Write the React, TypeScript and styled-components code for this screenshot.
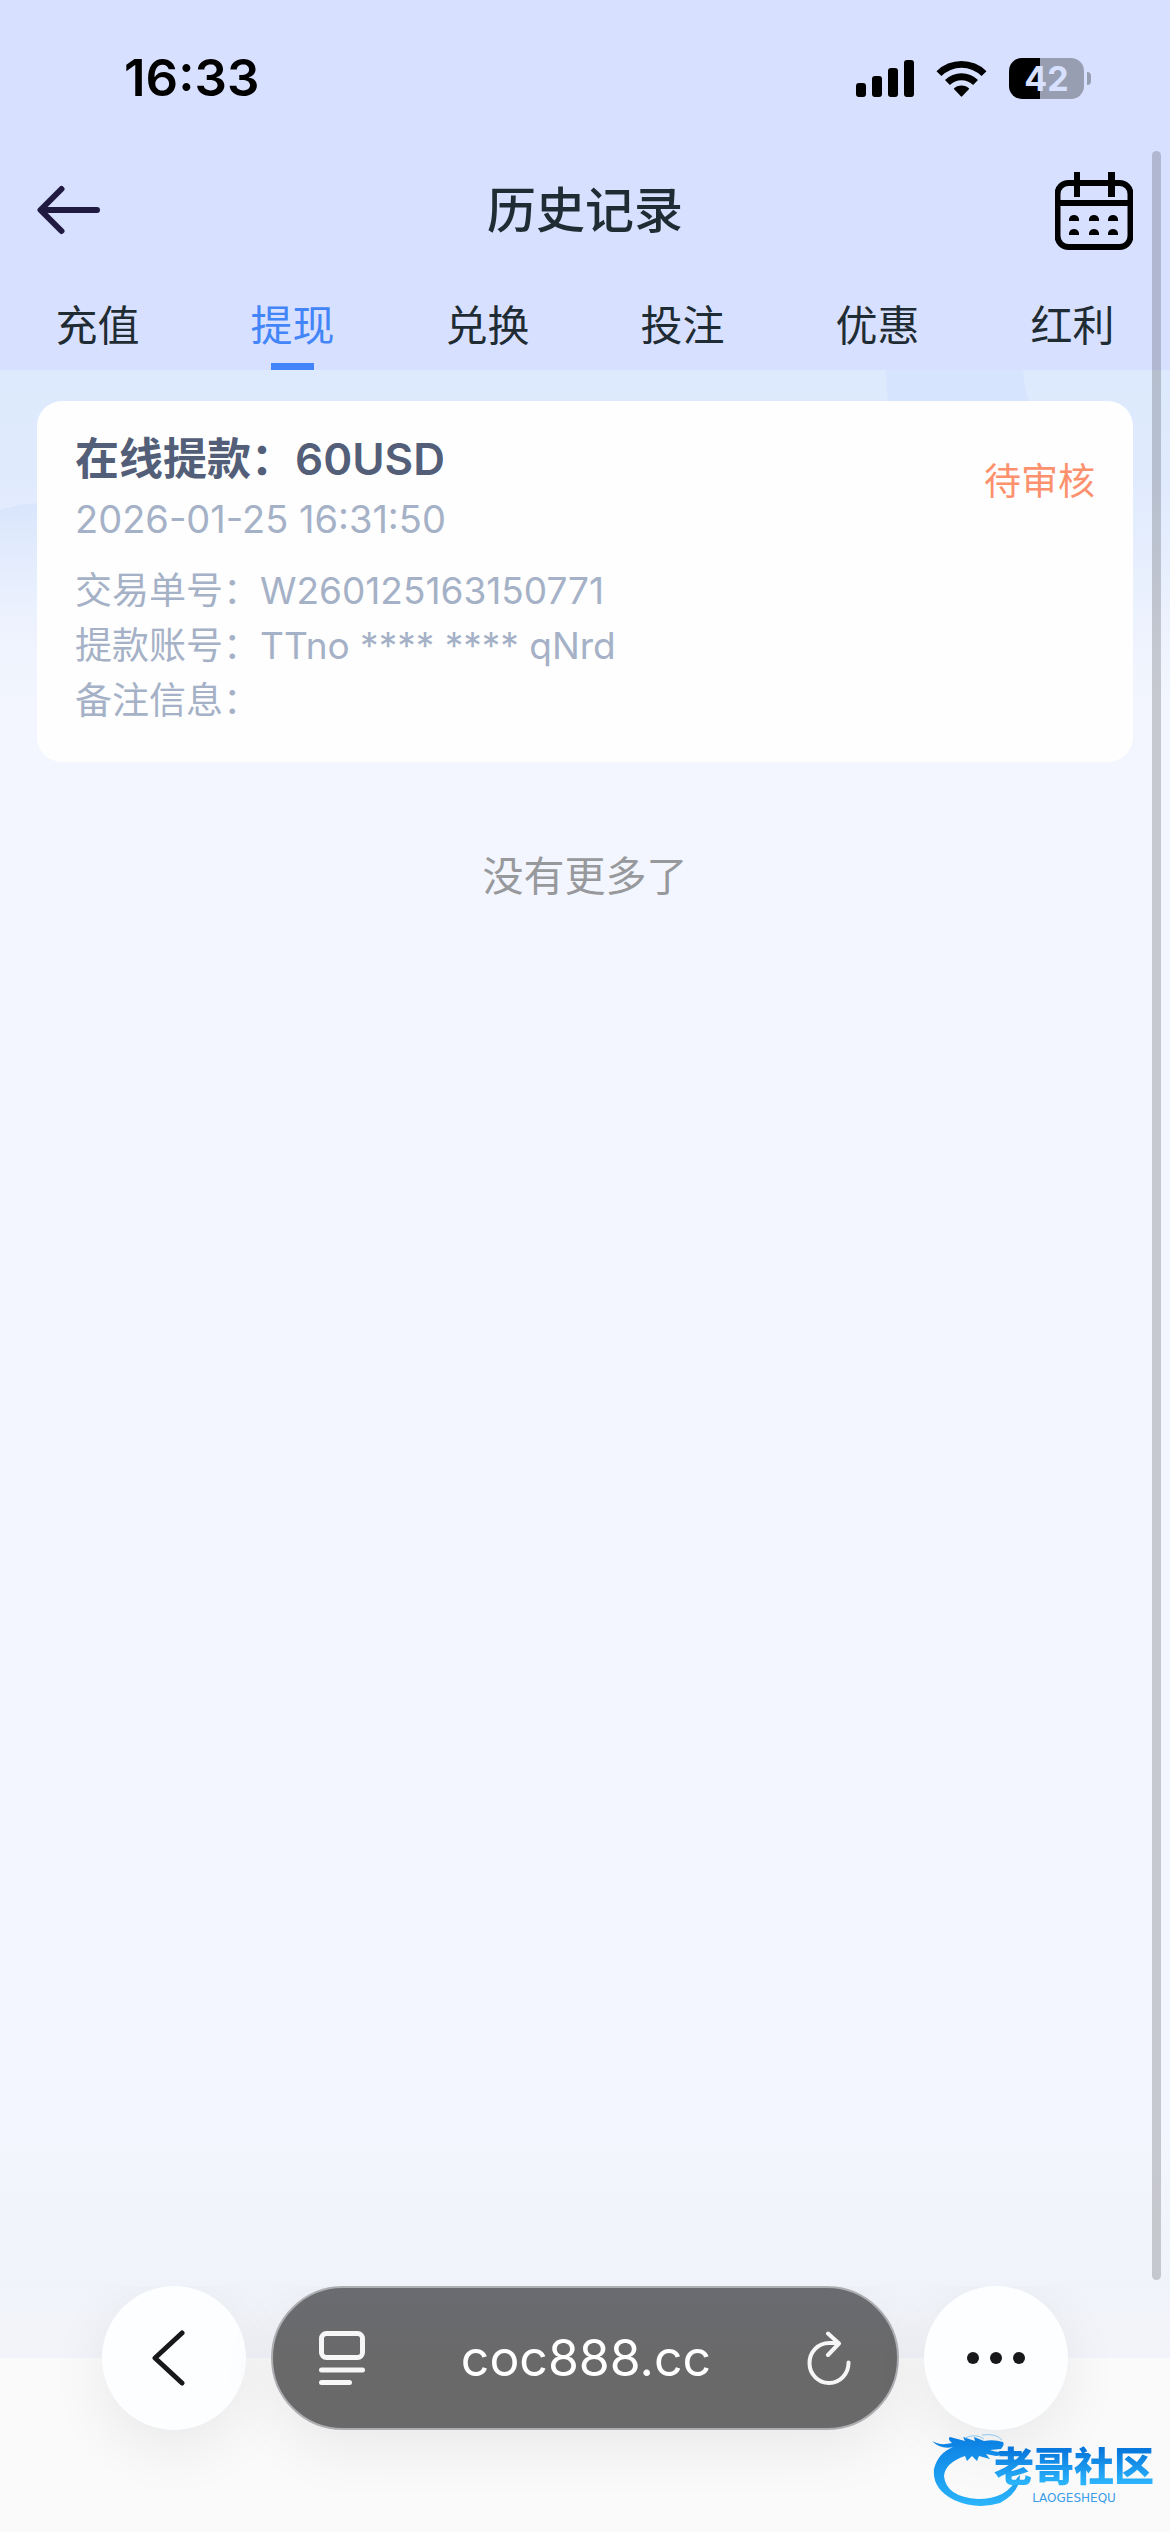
import React, { useState } from "react";
import styled, { createGlobalStyle } from "styled-components";

const GlobalStyle = createGlobalStyle`
  *, *::before, *::after { box-sizing: border-box; }
  body {
    margin: 0;
    background: #f3f6fe;
    font-family: Inter, "Noto Sans CJK SC", sans-serif;
  }
  button {
    margin: 0;
    padding: 0;
    border: 0;
    background: none;
    color: inherit;
    font: inherit;
    cursor: pointer;
  }
  svg { display: block; }
`;

const Page = styled.div`
  position: relative;
  display: flex;
  flex-direction: column;
  min-height: 100vh;
  background: #f3f6fe;
`;

const Top = styled.div`
  background: #d8e0ff;
`;

const StatusBar = styled.div`
  display: flex;
  align-items: center;
  justify-content: space-between;
  height: 156px;
  padding: 0 79px 0 124px;
  color: #000;
`;

const Clock = styled.time`
  font-size: 51px;
  font-weight: 600;
  line-height: 60px;
`;

const Indicators = styled.div`
  display: flex;
  align-items: center;
  gap: 22px;
`;

const Battery = styled.div`
  display: flex;
  align-items: center;
  gap: 3px;
`;

const BatteryBody = styled.span<{ $level: number }>`
  display: flex;
  align-items: center;
  justify-content: center;
  width: 75px;
  height: 41px;
  border-radius: 13px;
  background: linear-gradient(to right, #000 ${(p) => p.$level}%, #979eb2 ${(p) => p.$level}%);
  color: #d8e0ff;
  font-size: 34px;
  font-weight: 700;
  line-height: 41px;
`;

const BatteryTip = styled.span`
  width: 4px;
  height: 13px;
  border-radius: 0 4px 4px 0;
  background: #979eb2;
`;

const Header = styled.header`
  display: grid;
  grid-template-columns: 1fr auto 1fr;
  align-items: center;
  height: 120px;
  padding: 0 37px 10px;
`;

const Title = styled.h1`
  margin: 0;
  color: #1f2c33;
  font-size: 49px;
  font-weight: 500;
  line-height: 60px;
`;

const HeaderButton = styled.button<{ $end?: boolean }>`
  justify-self: ${(p) => (p.$end ? "end" : "start")};
`;

const Tabs = styled.nav`
  display: grid;
  grid-template-columns: repeat(6, 1fr);
  height: 94px;
  border-top: 2px solid #d6e2fe;
`;

const Tab = styled.button<{ $active: boolean }>`
  display: flex;
  flex-direction: column;
  align-items: center;
  justify-content: flex-end;
  gap: 6px;
  color: ${(p) => (p.$active ? "#4285f9" : "#1f2c33")};
  font-size: 42px;
  line-height: 62px;

  &::after {
    content: "";
    width: 43px;
    height: 7px;
    background: ${(p) => (p.$active ? "#4285f9" : "transparent")};
  }
`;

const Content = styled.main`
  position: relative;
  flex: 1;
  padding: 31px 37px;
  background: linear-gradient(#dde9fc 0, #dfeafd 100px, #f3f6fe 330px, #f3f6fe 92%, #f0f3f9 100%);
`;

const Backdrop = styled.svg`
  position: absolute;
  top: 0;
  left: 0;
  width: 100%;
  height: 330px;
`;

const Card = styled.article`
  position: relative;
  display: flex;
  flex-direction: column;
  gap: 14px;
  padding: 28px 38px 34px;
  border-radius: 25px;
  background: #fefefe;
`;

const CardHead = styled.div`
  display: flex;
  align-items: center;
  justify-content: space-between;
`;

const Amount = styled.h2`
  margin: 0;
  color: #535e78;
  font-size: 44px;
  font-weight: 600;
  line-height: 60px;
`;

const Stamp = styled.time`
  display: block;
  color: #a5b1c6;
  font-size: 38px;
  line-height: 60px;
`;

const Status = styled.span`
  padding-bottom: 16px;
  color: #fd916d;
  font-size: 37px;
  line-height: 55px;
`;

const Details = styled.dl`
  margin: 0;
  color: #a5b1c6;
  font-size: 37px;
  line-height: 55px;
`;

const Detail = styled.div`
  display: flex;

  dd { margin: 0; }
`;

const End = styled.p`
  position: relative;
  margin: 83px 0 0;
  color: #97999c;
  font-size: 41px;
  line-height: 62px;
  text-align: center;
`;

const Toolbar = styled.footer`
  display: flex;
  align-items: flex-start;
  gap: 25px;
  height: 246px;
  padding: 0 102px;
  background: linear-gradient(#f0f3f9 0, #f3f4f9 72px, #fafafa 72px);
`;

const RoundButton = styled.button`
  display: flex;
  flex: none;
  align-items: center;
  justify-content: center;
  width: 144px;
  height: 144px;
  border-radius: 72px;
  background: #fdfeff;
  box-shadow: 0 18px 60px rgba(0, 0, 0, 0.07);
`;

const AddressBar = styled.div`
  display: flex;
  flex: 1;
  align-items: center;
  justify-content: space-between;
  height: 144px;
  padding: 0 46px;
  border: 2px solid #adaeb2;
  border-radius: 72px;
  background: linear-gradient(#6a6b70, #696969 60%);
  box-shadow: 0 18px 60px rgba(0, 0, 0, 0.07);
  color: #fff;
`;

const Address = styled.button`
  font-size: 50px;
  line-height: 60px;
`;

const ScrollThumb = styled.div`
  position: absolute;
  top: 151px;
  right: 9px;
  bottom: 252px;
  width: 9px;
  border-radius: 5px;
  background: rgba(0, 0, 0, 0.18);
`;

const Watermark = styled.div`
  position: absolute;
  right: 16px;
  bottom: 24px;
  display: flex;
  justify-content: flex-end;
  width: 222px;
  height: 78px;
`;

const WatermarkMark = styled.svg`
  position: absolute;
  top: 0;
  left: 0;
`;

const WatermarkWords = styled.div`
  position: relative;
  display: flex;
  flex-direction: column;
  align-items: center;
  padding-top: 14px;
`;

const WatermarkName = styled.span`
  background: linear-gradient(#0878dd 15%, #2bb4fb 85%);
  background-clip: text;
  -webkit-text-fill-color: transparent;
  font-size: 40px;
  font-weight: 900;
  line-height: 46px;
`;

const WatermarkLatin = styled.span`
  color: #3a9de8;
  font-family: "DejaVu Sans", sans-serif;
  font-size: 12px;
  line-height: 16px;
`;

const SignalIcon = () => (
  <svg width="58" height="37" viewBox="0 0 58 37" aria-hidden="true">
    <rect x="0" y="23" width="10" height="14" rx="3" />
    <rect x="16" y="16" width="10" height="21" rx="3" />
    <rect x="32" y="8" width="10" height="29" rx="3" />
    <rect x="48" y="0" width="10" height="37" rx="3" />
  </svg>
);

const WifiIcon = () => (
  <svg width="51" height="37" viewBox="0 0 51 37" aria-hidden="true">
    <path d="M0.500 11.200 A35.500 35.500 0 0 1 50.500 11.200 L45.600 16.100 A28.500 28.500 0 0 0 5.400 16.100 Z" />
    <path d="M9 20 A23.500 23.500 0 0 1 42 20 L37.100 25 A16.500 16.500 0 0 0 13.900 25 Z" />
    <path d="M17.700 28.700 A11.200 11.200 0 0 1 33.300 28.700 L26.200 36.300 Q25.500 37 24.800 36.300 Z" />
  </svg>
);

const BackArrow = () => (
  <svg width="63" height="54" viewBox="0 0 63 54" fill="none" stroke="#201a40" strokeWidth="6" strokeLinecap="round" strokeLinejoin="round" aria-hidden="true">
    <path d="M24.500 5 L3.500 26 L24.500 47 M4 26 H60" />
  </svg>
);

const CalendarIcon = () => (
  <svg width="78" height="78" viewBox="0 0 78 78" aria-hidden="true">
    <rect x="2.500" y="11" width="73" height="64" rx="11" fill="none" stroke="#000" strokeWidth="6" />
    <path d="M0 28 H78 V34 H0 Z M19 0 H25 V25 H19 Z M53 0 H60 V25 H53 Z" />
    {[43, 57].map((y) =>
      [14, 34, 53].map((x) => (
        <path key={`${x}-${y}`} d={`M${x} ${y + 6} v-2 q1 -4 5 -4 q4 0 5 4 v2 Z`} />
      )),
    )}
  </svg>
);

const ChevronIcon = () => (
  <svg width="46" height="56" viewBox="0 0 46 56" fill="none" stroke="#18181b" strokeWidth="5" strokeLinecap="round" strokeLinejoin="round" aria-hidden="true">
    <path d="M31 3 L4 28 L31 53" />
  </svg>
);

const ReaderIcon = () => (
  <svg width="46" height="54" viewBox="0 0 46 54" fill="none" stroke="#f6f6f6" strokeWidth="5" strokeLinecap="round" aria-hidden="true">
    <rect x="2.500" y="2.500" width="41" height="24" rx="5" />
    <path d="M2.500 39 H43.500 M2.500 51.500 H30.500" />
  </svg>
);

const ReloadIcon = () => (
  <svg width="44" height="54" viewBox="0 0 44 54" fill="none" stroke="#f6f6f6" strokeWidth="4" strokeLinecap="round" strokeLinejoin="round" aria-hidden="true">
    <path d="M41.500 31.500 A19.500 20 0 1 1 22 12 H31" />
    <path d="M21 2.500 L32 12.500 L21 24" />
  </svg>
);

const MoreIcon = () => (
  <svg width="58" height="12" viewBox="0 0 58 12" fill="#18181b" aria-hidden="true">
    <circle cx="6" cy="6" r="6" />
    <circle cx="29" cy="6" r="6" />
    <circle cx="52" cy="6" r="6" />
  </svg>
);

const DragonMark = () => (
  <WatermarkMark width="92" height="78" viewBox="0 0 92 78" aria-hidden="true">
    <defs>
      <linearGradient id="dragon" x1="0" y1="0" x2="0" y2="1">
        <stop offset="0" stopColor="#0a7fe2" />
        <stop offset="1" stopColor="#2bb4fb" />
      </linearGradient>
    </defs>
    <path
      fill="url(#dragon)"
      d="M0 11 Q8 16 20 13 Q15 9 18 7 L33 11 L31 7 L43 11 L42 7 L52 11 Q62 9 71 12 Q73 15 69 19 L58 20 Q65 23 70 21 Q69 26 64 26 L54 24 L58 29 L47 26 L45 31 L40 26 L35 31 L33 26 Q13 33 12 46 Q14 67 46 69 Q75 69 85 48 L88 45 Q88 62 68 73 Q45 80 22 70 Q0 59 2 39 Q6 23 21 17 Q9 20 0 11 Z"
    />
    <path fill="none" stroke="#8cc6f5" strokeWidth="1" d="M33 8 Q44 3 52 9 M50 5 Q64 3 70 10" />
  </WatermarkMark>
);

const TABS = ["充值", "提现", "兑换", "投注", "优惠", "红利"];

const DETAILS = [
  { label: "交易单号：", value: "W260125163150771" },
  { label: "提款账号：", value: "TTno **** **** qNrd" },
  { label: "备注信息：", value: "" },
];

export default function App() {
  const [active, setActive] = useState("提现");

  return (
    <Page>
      <GlobalStyle />
      <Top>
        <StatusBar>
          <Clock>16:33</Clock>
          <Indicators>
            <SignalIcon />
            <WifiIcon />
            <Battery>
              <BatteryBody $level={42}>42</BatteryBody>
              <BatteryTip />
            </Battery>
          </Indicators>
        </StatusBar>
        <Header>
          <HeaderButton type="button" aria-label="返回">
            <BackArrow />
          </HeaderButton>
          <Title>历史记录</Title>
          <HeaderButton type="button" aria-label="选择日期" $end>
            <CalendarIcon />
          </HeaderButton>
        </Header>
        <Tabs>
          {TABS.map((name) => (
            <Tab key={name} type="button" $active={name === active} onClick={() => setActive(name)}>
              {name}
            </Tab>
          ))}
        </Tabs>
      </Top>

      <Content>
        <Backdrop viewBox="0 0 1170 330" preserveAspectRatio="none" aria-hidden="true">
          <defs>
            <linearGradient id="hill" x1="0" y1="0" x2="0" y2="1">
              <stop offset="0" stopColor="#d8e5fc" />
              <stop offset="1" stopColor="#f3f6fe" stopOpacity="0" />
            </linearGradient>
          </defs>
          <path fill="#d7e4fe" d="M886 0 H1023 Q1024 18 1030 34 H888 Q886 16 886 0 Z" />
          <path fill="url(#hill)" d="M0 140 Q18 134 40 133 V290 H0 Z" />
        </Backdrop>
        <Card>
          <CardHead>
            <div>
              <Amount>在线提款：60USD</Amount>
              <Stamp>2026-01-25 16:31:50</Stamp>
            </div>
            <Status>待审核</Status>
          </CardHead>
          <Details>
            {DETAILS.map((row) => (
              <Detail key={row.label}>
                <dt>{row.label}</dt>
                <dd>{row.value}</dd>
              </Detail>
            ))}
          </Details>
        </Card>
        <End>没有更多了</End>
      </Content>

      <Toolbar>
        <RoundButton type="button" aria-label="后退">
          <ChevronIcon />
        </RoundButton>
        <AddressBar>
          <button type="button" aria-label="页面菜单">
            <ReaderIcon />
          </button>
          <Address type="button">coc888.cc</Address>
          <button type="button" aria-label="重新载入">
            <ReloadIcon />
          </button>
        </AddressBar>
        <RoundButton type="button" aria-label="更多">
          <MoreIcon />
        </RoundButton>
      </Toolbar>

      <ScrollThumb />
      <Watermark>
        <DragonMark />
        <WatermarkWords>
          <WatermarkName>老哥社区</WatermarkName>
          <WatermarkLatin>LAOGESHEQU</WatermarkLatin>
        </WatermarkWords>
      </Watermark>
    </Page>
  );
}
